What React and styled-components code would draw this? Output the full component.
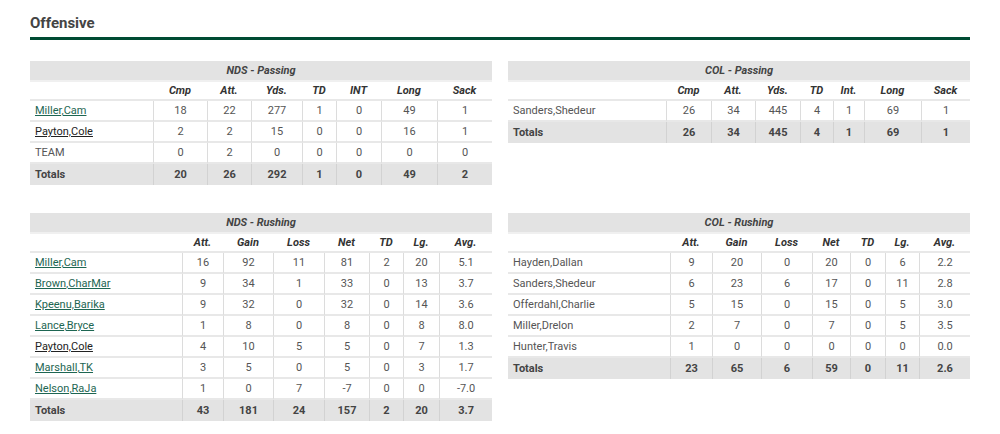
import React from "react";
import styled, { createGlobalStyle } from "styled-components";

const GlobalStyle = createGlobalStyle`
  body {
    margin: 0;
    background: #fff;
    font-family: Roboto, "Liberation Sans", Arial, sans-serif;
  }
`;

const Page = styled.div`
  padding: 14px 30px 0 30px;
  width: 940px;
`;

const Title = styled.h2`
  margin: 0;
  font-size: 15px;
  line-height: 18px;
  font-weight: 700;
  color: #444;
`;

const Rule = styled.div`
  height: 3px;
  margin-top: 5px;
  background-color: #004b33;
`;

const Grid = styled.div`
  display: grid;
  grid-template-columns: 462px 462px;
  column-gap: 16px;
  row-gap: 28px;
  align-items: start;
  margin-top: 21px;
`;

const Table = styled.table`
  width: 462px;
  table-layout: fixed;
  border-collapse: separate;
  border-spacing: 0;
  font-size: 11px;
`;

const CaptionCell = styled.th`
  background-color: #e3e3e3;
  color: #444;
  font-weight: 700;
  font-style: italic;
  text-align: center;
  line-height: 19px;
  padding: 0;
  border-bottom: 2px solid #f0f0f0;
`;

const HeadCell = styled.th`
  background-color: #fff;
  color: #333;
  font-weight: 700;
  font-style: italic;
  text-align: center;
  line-height: 17px;
  padding: 0;
  border-bottom: 2px solid #e8e8e8;
`;

const Cell = styled.td`
  color: #555;
  text-align: ${(p) => (p.$name ? "left" : "center")};
  padding: 0 0 0 ${(p) => (p.$name ? "5px" : "0")};
  line-height: 19px;
  border-bottom: 2px solid #e8e8e8;
  border-left: ${(p) => (p.$name ? "none" : "1px solid #dcdcdc")};
  white-space: nowrap;
`;

const TotalCell = styled.td`
  background-color: #e3e3e3;
  color: #444;
  font-weight: 700;
  text-align: ${(p) => (p.$name ? "left" : "center")};
  padding: 0 0 0 ${(p) => (p.$name ? "5px" : "0")};
  line-height: 21px;
  border-left: ${(p) => (p.$name ? "none" : "1px solid #d2d2d2")};
`;

const PlayerLink = styled.a`
  color: ${(p) => (p.$visited ? "#222" : "#1d6652")};
  text-decoration: underline;
  cursor: pointer;
`;

const StatTable = ({ title, cols, widths, rows, totals }) => (
  <Table>
    <colgroup>
      {widths.map((w, i) => (
        <col key={i} style={{ width: w }} />
      ))}
    </colgroup>
    <thead>
      <tr>
        <CaptionCell colSpan={cols.length}>{title}</CaptionCell>
      </tr>
      <tr>
        {cols.map((c, i) => (
          <HeadCell key={i}>{c}</HeadCell>
        ))}
      </tr>
    </thead>
    <tbody>
      {rows.map((r, i) => (
        <tr key={i}>
          <Cell $name>
            {r.link ? (
              <PlayerLink $visited={r.link === "visited"}>{r.name}</PlayerLink>
            ) : (
              r.name
            )}
          </Cell>
          {r.stats.map((s, j) => (
            <Cell key={j}>{s}</Cell>
          ))}
        </tr>
      ))}
      <tr>
        <TotalCell $name>Totals</TotalCell>
        {totals.map((s, j) => (
          <TotalCell key={j}>{s}</TotalCell>
        ))}
      </tr>
    </tbody>
  </Table>
);

const passCols = ["", "Cmp", "Att.", "Yds.", "TD", "INT", "Long", "Sack"];
const rushCols = ["", "Att.", "Gain", "Loss", "Net", "TD", "Lg.", "Avg."];

export default function App() {
  return (
    <Page>
      <GlobalStyle />
      <Title>Offensive</Title>
      <Rule />
      <Grid>
        <StatTable
          title="NDS - Passing"
          cols={passCols}
          widths={[123, 54, 44, 51, 34, 45, 56, 55]}
          rows={[
            { name: "Miller,Cam", link: "new", stats: [18, 22, 277, 1, 0, 49, 1] },
            { name: "Payton,Cole", link: "visited", stats: [2, 2, 15, 0, 0, 16, 1] },
            { name: "TEAM", stats: [0, 2, 0, 0, 0, 0, 0] },
          ]}
          totals={[20, 26, 292, 1, 0, 49, 2]}
        />
        <StatTable
          title="COL - Passing"
          cols={["", "Cmp", "Att.", "Yds.", "TD", "Int.", "Long", "Sack"]}
          widths={[158, 45, 44, 45, 33, 31, 57, 49]}
          rows={[{ name: "Sanders,Shedeur", stats: [26, 34, 445, 4, 1, 69, 1] }]}
          totals={[26, 34, 445, 4, 1, 69, 1]}
        />
        <StatTable
          title="NDS - Rushing"
          cols={rushCols}
          widths={[152, 41, 50, 51, 45, 34, 36, 53]}
          rows={[
            { name: "Miller,Cam", link: "new", stats: [16, 92, 11, 81, 2, 20, "5.1"] },
            { name: "Brown,CharMar", link: "new", stats: [9, 34, 1, 33, 0, 13, "3.7"] },
            { name: "Kpeenu,Barika", link: "new", stats: [9, 32, 0, 32, 0, 14, "3.6"] },
            { name: "Lance,Bryce", link: "new", stats: [1, 8, 0, 8, 0, 8, "8.0"] },
            { name: "Payton,Cole", link: "visited", stats: [4, 10, 5, 5, 0, 7, "1.3"] },
            { name: "Marshall,TK", link: "new", stats: [3, 5, 0, 5, 0, 3, "1.7"] },
            { name: "Nelson,RaJa", link: "new", stats: [1, 0, 7, -7, 0, 0, "-7.0"] },
          ]}
          totals={[43, 181, 24, 157, 2, 20, "3.7"]}
        />
        <StatTable
          title="COL - Rushing"
          cols={rushCols}
          widths={[162, 42, 49, 51, 38, 35, 34, 51]}
          rows={[
            { name: "Hayden,Dallan", stats: [9, 20, 0, 20, 0, 6, "2.2"] },
            { name: "Sanders,Shedeur", stats: [6, 23, 6, 17, 0, 11, "2.8"] },
            { name: "Offerdahl,Charlie", stats: [5, 15, 0, 15, 0, 5, "3.0"] },
            { name: "Miller,Drelon", stats: [2, 7, 0, 7, 0, 5, "3.5"] },
            { name: "Hunter,Travis", stats: [1, 0, 0, 0, 0, 0, "0.0"] },
          ]}
          totals={[23, 65, 6, 59, 0, 11, "2.6"]}
        />
      </Grid>
    </Page>
  );
}
